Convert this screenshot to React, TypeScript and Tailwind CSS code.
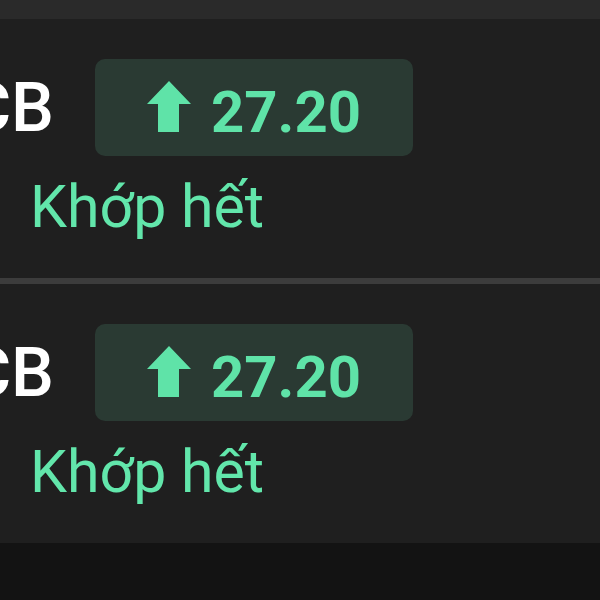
function UpArrow() {
  return (
    <svg width="44" height="51" viewBox="0 0 44 51" className="mb-[10px] shrink-0">
      <polygon points="22,0 44,23 32,23 32,51 11,51 11,23 0,23" fill="#5fe3a8" />
    </svg>
  );
}

function OrderRow() {
  return (
    <div className="h-[259px] bg-[#1f1f1f]">
      <div className="flex items-center pt-[40px]">
        <div className="flex w-[54px] justify-end whitespace-nowrap text-[68px] font-medium leading-none text-white">
          VCB
        </div>
        <div className="ml-[41px] flex h-[97px] w-[318px] items-center justify-center gap-[20px] rounded-[10px] bg-[#2a3a33] pt-2">
          <UpArrow />
          <span className="text-[58px] font-bold leading-none text-[#5fe3a8]">27.20</span>
        </div>
      </div>
      <div className="mt-[21px] pl-[30px] text-[59px] leading-none text-[#62e6ab]">Khớp hết</div>
    </div>
  );
}

export default function App() {
  return (
    <div className="flex h-[600px] w-[600px] flex-col overflow-hidden bg-[#131313] font-['Roboto',sans-serif]">
      <div className="h-[19px] bg-[#2a2a2a]" />
      <OrderRow />
      <div className="h-[6px] bg-[#3c3c3c]" />
      <OrderRow />
    </div>
  );
}
